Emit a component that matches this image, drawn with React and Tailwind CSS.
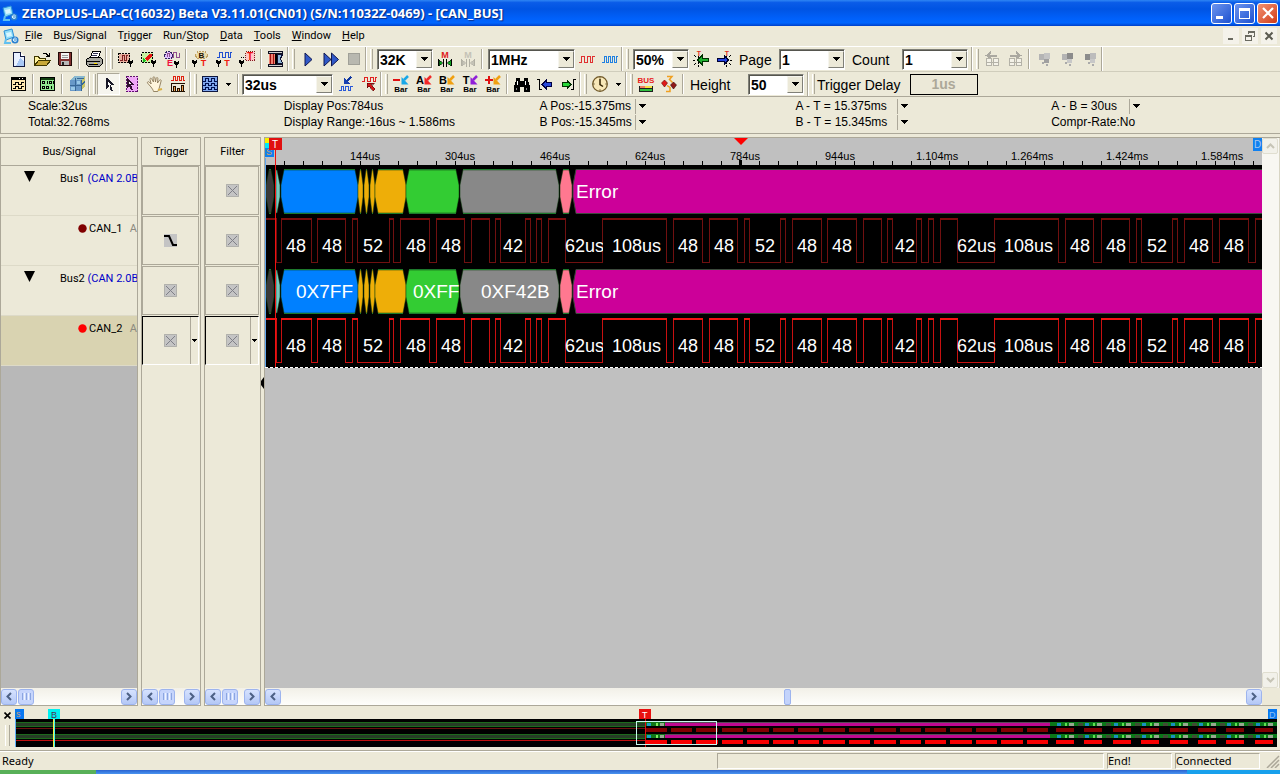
import React from "react";

/* ---------- icons ---------- */

const Svg = ({ children, w = 18, h = 18, box = "0 0 18 18" }) => (
  <svg width={w} height={h} viewBox={box} fill="none" shapeRendering="crispEdges" aria-hidden="true" className="block shrink-0">
    {children}
  </svg>
);

const Letter = ({ x, y, size, fill, children }) => (
  <text x={x} y={y} fontSize={size} fill={fill} textAnchor="middle" className="font-['Liberation_Sans',sans-serif] font-bold">
    {children}
  </text>
);

const Probe = ({ x, y }) => (
  <path d={`M${x} ${y}h1v1h2v-1h1v3h-1v1h-1v3h-1v-3h-1v-1h-1v-3z`} fill="#000" />
);

const NewIcon = () => (
  <Svg>
    <path d="M3.500 2.500h7l4 4v10h-11z" fill="#e8f0ff" stroke="#101840" />
    <path d="M10 8l4 4v4h-8z" fill="#a9c8f5" />
    <path d="M10.500 2.500v4h4" stroke="#101840" fill="#fff" />
  </Svg>
);
const OpenIcon = () => (
  <Svg>
    <path d="M1.500 15.500v-9h4l1 2h6v2" fill="#fff3a0" stroke="#403800" />
    <path d="M1.500 15.500l4-5h12l-4 5z" fill="#c8a838" stroke="#403800" />
    <path d="M10 3.500h3l3 3M16.500 3v4M13 6.500h4" stroke="#000" />
  </Svg>
);
const SaveIcon = () => (
  <Svg>
    <path d="M2.500 2.500h13v13h-12l-1-1z" fill="#803030" stroke="#200808" />
    <path d="M5 3h8v6h-8z" fill="#f4f4f4" />
    <path d="M6 5h6M6 7h6" stroke="#999" />
    <path d="M5 11h8v4h-8z" fill="#b8b8b8" />
    <path d="M6 12h2v3h-2z" fill="#222" />
  </Svg>
);
const PrintIcon = () => (
  <Svg>
    <path d="M5.500 7.500l2-6h8l-2 6z" fill="#fff" stroke="#000" />
    <path d="M8 3.500h5M7 5.500h5" stroke="#335" />
    <path d="M1.500 9.500l3-2h11l2 2v4l-3 3h-11l-2-2z" fill="#a8a8a0" stroke="#000" />
    <path d="M2 11.500h13M4 14.500h9" stroke="#000" />
    <path d="M9 13h3v1h-3z" fill="#ffe000" />
  </Svg>
);
const TrigBus = () => (
  <Svg>
    <path d="M1.500 3.500h11v9h-11z" fill="#e8b0a0" stroke="#000" strokeDasharray="2 1" />
    <path d="M3 10.500h2v-5h2v5h2v-5h2" stroke="#802020" />
    <Probe x={12} y={10} />
  </Svg>
);
const TrigSig = () => (
  <Svg>
    <path d="M1.500 2.500h11v10h-11z" fill="#c8f0a0" stroke="#000" strokeDasharray="2 1" />
    <path d="M5 9l4-5h3v3l-5 4z" fill="#e81010" />
    <path d="M3 8l3 2-1 2h-2z" fill="#10c020" />
    <Probe x={12} y={10} />
  </Svg>
);
const TrigEdge = () => (
  <Svg>
    <path d="M1.500 5.500l2-4h4l2 4-1 3h-6z" fill="#e0c0ff" stroke="#302060" strokeDasharray="2 1" />
    <path d="M4 7v-4h2v4M9 7.500h1v-5h3v5h3v-5" stroke="#905090" />
    <Letter x={7} y={16} size={9} fill="#f01040">E</Letter>
    <Probe x={12} y={11} />
  </Svg>
);
const TrigB = () => (
  <Svg>
    <path d="M3 5.500l3-4h7l3 4-3 3h-7z" fill="#ead9a8" stroke="#c0a060" strokeDasharray="2 1" />
    <Letter x={9.500} y={8} size={8} fill="#201000">B</Letter>
    <Letter x={11.500} y={16} size={9} fill="#f02010">T</Letter>
    <Probe x={1} y={10} />
  </Svg>
);
const TrigWave = () => (
  <Svg>
    <path d="M2 7.500h2v-5h3v5h3v-5h3v5h2v-5h2" stroke="#2050d0" />
    <Letter x={12} y={16} size={9} fill="#f02010">T</Letter>
    <Probe x={2} y={10} />
  </Svg>
);
const TrigMark = () => (
  <Svg>
    <path d="M7.500 1.500h9v9h-9z" fill="#ffc8c8" stroke="#802020" strokeDasharray="1 1" />
    <Letter x={12} y={10} size={10} fill="#f01010">T</Letter>
    <Probe x={2} y={10} />
    <path d="M3 7.500h4" stroke="#000" strokeDasharray="1 1" />
  </Svg>
);
const DoorIcon = () => (
  <Svg>
    <path d="M1.500 1.500h14v2h-14zM1.500 14.500h14v2h-14z" fill="#d0d0d0" stroke="#101020" />
    <path d="M2 4h8v10h-8z" fill="#f08070" />
    <path d="M3.500 4v10M6.500 4v10" stroke="#a01010" />
    <path d="M9 4v10" stroke="#000" strokeWidth="2" />
    <path d="M10.500 4.500h5l-2 4 2 5h-5z" fill="#90b8d8" stroke="#101030" />
  </Svg>
);
const Play = () => (
  <svg width="18" height="18" viewBox="0 0 18 18" className="block"><path d="M6 3l7 6.500-7 6.500z" fill="#3058c8" stroke="#101850" /></svg>
);
const Fast = () => (
  <svg width="18" height="18" viewBox="0 0 18 18" className="block"><path d="M2 3l7 6.500-7 6.500zM9.500 3l7 6.500-7 6.500z" fill="#3058c8" stroke="#101850" /></svg>
);
const Stop = () => (
  <Svg><path d="M3.500 3.500h11v11h-11z" fill="#b8b8b0" stroke="#a0a098" /></Svg>
);
const MIcon = ({ m = "#e02020", a = "#10a020", k = "#000" }) => (
  <Svg>
    <Letter x={9} y={8} size={9} fill={m}>M</Letter>
    <path d="M7.500 9v8M10.500 9v8M2.500 9v7M15.500 9v7" stroke={k} />
    <path d="M3 10l4 3-4 3zM15 10l-4 3 4 3z" fill={a} stroke={k} strokeWidth="0.500" />
  </Svg>
);
const Waves = ({ c, n }) => (
  <Svg>
    <path d={n === 3 ? "M1 12.500h2v-6h3v6h3v-6h3v6h2v-6h3" : "M1 12.500h2v-6h2v6h2v-6h2v6h2v-6h2v6h2v-6h2"} stroke={c} />
  </Svg>
);
const Move = ({ left }) => (
  <Svg>
    <path d={left ? "M6.500 6v12" : "M11.500 6v12"} stroke="#000" strokeDasharray="2 1" />
    <Letter x={left ? 7 : 12} y={6} size={7} fill="#e03020">T</Letter>
    {left ? (
      <path d="M5.500 10l4.500-4.500v3h6v3h-6v3z" fill="#20b030" stroke="#003000" />
    ) : (
      <path d="M13.500 10l-4.500-4.500v3h-7v3h7v3z" fill="#2040e0" stroke="#000030" />
    )}
    <path d={left ? "M2 5l2 2M2 15l2-2M1 10h2" : "M16 5l-2 2M16 15l-2-2M15 10h2"} stroke="#000" />
  </Svg>
);
const PageMove = ({ right }) => (
  <Svg>
    <path d={right ? "M4 5.500h8M10 2l4 3.500-4 3" : "M6 5.500h8M8 2l-4 3.500 4 3"} stroke="#aaa8a0" strokeWidth="2" />
    <path d="M3.500 8.500h5v7h-5zM10.500 8.500h5v7h-5zM3 12h13" stroke="#b4b2a8" fill="#f4f2e8" />
  </Svg>
);
const Blocks = ({ n }) => (
  <Svg>
    <path d="M4 4h6v6h-6z" fill={n === 3 ? "#8c8c8c" : "#b4b4b4"} />
    <path d="M9 3h6v6h-6z" fill={n === 2 ? "#8c8c8c" : n === 1 ? "#c4c4c4" : "#bcbcbc"} />
    <path d="M9 9h5v4h-5z" fill={n === 1 ? "#a0a0a0" : "#c8c8c8"} />
    <path d="M7 12h2v2h-2zM11 14h2v2h-2z" fill="#aaa" />
  </Svg>
);

const WinWave = () => (
  <Svg>
    <path d="M1.500 2.500h14v13h-14z" fill="#ffe8b0" stroke="#000" />
    <path d="M2 3h13v2h-13z" fill="#000" />
    <path d="M3 9.500h2v-2h3v2h3v-2h3M3 13.500h2v-2h3v2h3v-2h3" stroke="#000" />
    <path d="M12 3.500h1M9 3.500h1" stroke="#fff" />
  </Svg>
);
const WinBits = () => (
  <Svg>
    <path d="M1.500 2.500h14v13h-14z" fill="#90e890" stroke="#000" />
    <path d="M2 3h13v2h-13z" fill="#104010" />
    <path d="M3.500 6.500h2v2h-2zM10.500 6.500h2v2h-2zM3.500 11.500h2v2h-2zM7.500 11.500h2v2h-2zM8.500 6v3M14.500 6v3M12.500 11v3" stroke="#000" />
  </Svg>
);
const Cube = () => (
  <Svg>
    <path d="M2 5l4-4h11v10l-4 5h-11z" fill="#c8c468" />
    <path d="M2 5h11v11h-11z" fill="#6898c8" />
    <path d="M6 1h11l-4 4h-11z" fill="#88b8d0" />
    <path d="M7.500 3v13M2 10.500h11l4-4M13.500 5v11M9 3.500h7" stroke="#386898" />
    <path d="M3 12h4v3h-4zM9 6h3v3h-3z" fill="#98c8e8" />
  </Svg>
);
const Cursor = () => (
  <Svg>
    <path d="M6 3h1l7 7h-3l2 6h-2l-2-5-3 3z" fill="#181828" />
    <path d="M8 7l3 3h-1v3l-1-3h-1z" fill="#fff" />
  </Svg>
);
const SelectIcon = () => (
  <Svg>
    <path d="M3.500 1.500h11v15h-11z" fill="#f0a8f8" stroke="#601070" strokeDasharray="2 1" />
    <path d="M4 3l7 7h-3l2 5h-2l-2-4-2 2z" fill="#301030" />
    <path d="M6 7l2 2h-1v2z" fill="#fff" />
  </Svg>
);
const Hand = () => (
  <svg width="18" height="18" viewBox="0 0 18 18" className="block">
    <path d="M5 12l-3.500-4c-.5-1 .8-1.800 1.700-1l2 2L4 4.500c-.3-1.300 1.200-1.800 1.700-.6L7.500 7 7 2.800c0-1.300 1.600-1.400 1.800-.2L9.500 7l.7-3.700c.3-1.200 1.800-.9 1.700.3L11.500 8l2-2.800c.7-1 2-.3 1.600.8L13.500 12c-.4 2-1.500 3.500-1.700 4.500H7.500C7.200 14.800 6 13.500 5 12z" fill="#fff6dc" stroke="#8a7858" strokeWidth=".9" />
    <path d="M12 15l4-1" stroke="#d8b048" strokeWidth="2" />
  </svg>
);
const Bars = () => (
  <Svg>
    <path d="M2 5.500h2v-4h2v4h2v-4h2v4h2v-4h2v4h2" stroke="#e02010" />
    <path d="M2 8.500h14M2.500 8v9M2 16.500h14" stroke="#201000" />
    <path d="M4 11h3v6h-3zM8 13h3v4h-3zM12 10h3v7h-3z" fill="#201000" />
    <path d="M5 12h1v4h-1zM9 14h1v2h-1zM13 11h1v5h-1z" fill="#f0a050" />
  </Svg>
);
const BlueWave = () => (
  <Svg>
    <path d="M1.500 1.500h15v15h-15z" fill="#80a8f0" stroke="#101840" />
    <path d="M2 6.500h2v-3h3v3h3v-3h3v3h3M2 10.500h2v-2h3v2h3v-2h3v2h3M2 14.500h2v-2h3v2h3v-2h3v2h3" stroke="#001050" />
  </Svg>
);
const GoDown = () => (
  <Svg>
    <path d="M14 2l-4 4" stroke="#1038a0" strokeWidth="2" />
    <path d="M7 3v6h7z" fill="#1840b0" />
    <path d="M2 15.500h2v-4h2v4h2v-4h3v4h2v-4h3" stroke="#2858d8" />
  </Svg>
);
const GoUp = () => (
  <Svg>
    <path d="M2 6.500h2v-4h3v4h3v-4h3v4h2v-4h2" stroke="#e02020" />
    <path d="M7 8h7v1h-3l4 5-2 2-4-5-2 2z" fill="#d01818" stroke="#400000" strokeWidth=".5" />
  </Svg>
);
const BarIcon = ({ k, c }) => (
  <svg width="20" height="20" viewBox="0 0 20 20" aria-hidden="true" className="block shrink-0">
    {k === "-" && <path d="M2 6h7" stroke="#e01010" strokeWidth="2" />}
    {k === "+" && <path d="M2 6h8M6 2v8" stroke="#e01010" strokeWidth="2" />}
    {k.length === 1 && k > "@" && <Letter x={6} y={10} size={11} fill="#000">{k}</Letter>}
    <path d="M17 2l-4 4" stroke={c} strokeWidth="2.500" />
    <path d="M10.500 3v7.500h7z" fill={c} />
    <Letter x={10} y={18} size={8} fill="#000">Bar</Letter>
  </svg>
);
const Binoc = () => (
  <Svg>
    <path d="M3 3h4v3h4v-3h4v3l2 5v6h-6v-5h-4v5h-6v-6l2-5z" fill="#000" />
    <path d="M4 6h1v4h-1zM12 6h1v4h-1z" fill="#fff" />
    <path d="M3.500 13v2M13.500 13v2" stroke="#888" />
  </Svg>
);
const JumpL = () => (
  <Svg>
    <path d="M1 4.500h2.500v10h2.500" stroke="#000" />
    <path d="M6 9.500l4-4v2h5v4h-5v2z" fill="#2848d8" stroke="#000040" />
  </Svg>
);
const JumpR = () => (
  <Svg>
    <path d="M17 4.500h-2.500v10h-2.500" stroke="#000" />
    <path d="M12 9.500l-4-4v2h-5v4h5v2z" fill="#28d838" stroke="#003000" />
  </Svg>
);
const Clock = () => (
  <svg width="18" height="18" viewBox="0 0 18 18" className="block">
    <circle cx="9" cy="9" r="7.300" fill="#f8e8b8" stroke="#705828" strokeWidth="1.300" />
    <path d="M9 4v5.500l3 2" stroke="#302000" strokeWidth="1.500" fill="none" />
    <path d="M9 2.500v1M9 14.500v1M2.500 9h1M14.500 9h1" stroke="#302000" />
  </svg>
);
const BusIcon = () => (
  <Svg>
    <Letter x={9} y={8} size={8} fill="#e82020">BUS</Letter>
    <path d="M2 11h14v6h-14z" fill="#202020" />
    <path d="M3 11h12v2h-12z" fill="#f8e040" />
    <path d="M3 11h5v2h-5z" fill="#f08060" />
    <path d="M3 14h12v2h-12z" fill="#30c040" />
  </Svg>
);
const Hearts = () => (
  <svg width="18" height="18" viewBox="0 0 18 18" className="block">
    <path d="M7 1.500h5l-2.500 3 3 3M6 16.500h4v-4l-3-2" stroke="#f0a020" fill="none" strokeWidth="1.500" />
    <path d="M1.500 8l3-3 3 3-3 4z" fill="#e01818" stroke="#600" strokeWidth=".6" />
    <path d="M10.500 10l3-3 3 3-3 4z" fill="#901818" stroke="#300" strokeWidth=".6" />
  </svg>
);
const AppLogo = () => (
  <svg width="16" height="16" viewBox="0 0 16 16" className="block shrink-0" aria-hidden="true">
    <path d="M1 3l8-2 2 8-8 3z" fill="#8fdcf8" stroke="#2a90d8" />
    <path d="M3 5l5-1 1 4-5 1z" fill="#d8f6ff" />
    <path d="M3 11l-1 4h6" stroke="#60c0f0" fill="none" strokeWidth="2" />
    <circle cx="12" cy="12" r="3.500" fill="#2a80d0" />
    <path d="M10 12h4M13.500 10.500c-1.500-1.200-3.500 0-3.200 1.500.2 1.600 2 2 3.200 1" stroke="#e0f8ff" fill="none" />
  </svg>
);

/* ---------- toolbar parts ---------- */

const Tool = ({ label, children, on }) => (
  <button
    type="button"
    aria-label={label}
    className={
      on
        ? "flex h-[22px] w-[23px] shrink-0 items-center justify-center border border-[#aca899] border-r-white border-b-white bg-[#f6f5ee]"
        : "flex h-[22px] w-[23px] shrink-0 items-center justify-center"
    }
  >
    {children}
  </button>
);

const Sep = () => (
  <span className="flex h-[20px] w-[6px] shrink-0 justify-center">
    <span className="w-[2px] border-r border-white bg-[#aca899]" />
  </span>
);

const Grip = () => (
  <span className="flex h-[24px] w-[9px] shrink-0 items-center gap-[3px]">
    <span className="h-full w-[2px] border-r border-white bg-[#aca899]" />
    <span className="h-[20px] w-[3px] border-r border-l border-r-[#aca899] border-l-white" />
  </span>
);

const Drop = () => (
  <svg width="5" height="3" viewBox="0 0 5 3" className="block shrink-0" shapeRendering="crispEdges">
    <path d="M0 0h5L2.500 3z" />
  </svg>
);

const Combo = ({ label, value, className }) => (
  <span className={"grid h-[21px] shrink-0 items-center border border-[#808078] border-r-white border-b-white bg-white " + className}>
    <select
      aria-label={label}
      className="col-start-1 row-start-1 h-[19px] w-full appearance-none border-t border-l border-[#55554e] bg-white pl-px text-[14px] leading-[18px] font-bold outline-none"
      defaultValue={value}
    >
      <option>{value}</option>
    </select>
    <span className="pointer-events-none col-start-1 row-start-1 flex h-[17px] w-[16px] items-center justify-center justify-self-end border border-[#f6f5ee] border-r-[#808078] border-b-[#808078] bg-[#ece9d8]">
      <svg width="7" height="4" viewBox="0 0 7 4" shapeRendering="crispEdges"><path d="M0 0h7L3.500 4z" /></svg>
    </span>
  </span>
);

/* ---------- scroll bars ---------- */

const Chevron = ({ right }) => (
  <svg width="8" height="9" viewBox="0 0 8 9" className="block">
    <path d={right ? "M2 1l3.500 3.500L2 8" : "M6 1L2.500 4.500 6 8"} fill="none" stroke="#4d6185" strokeWidth="2" />
  </svg>
);

const ArrowButton = ({ right }) => (
  <button
    type="button"
    aria-label={right ? "Scroll right" : "Scroll left"}
    className="flex h-[16px] w-[16px] shrink-0 items-center justify-center rounded-[3px] border border-[#9db4ee] bg-gradient-to-b from-[#d6e2fe] to-[#b4c8f6]"
  >
    <Chevron right={right} />
  </button>
);

const HScroll = ({ wide }) => (
  <div className="flex h-[17px] shrink-0 items-center bg-gradient-to-b from-[#f2f0e8] to-[#fefefb]">
    <ArrowButton />
    {wide ? (
      <>
        <span className="flex-[503]" />
        <span className="h-[16px] w-[7px] rounded-[2px] border border-[#9db4ee] bg-[#c3d3fb]" />
        <span className="flex-[455]" />
      </>
    ) : (
      <>
        <span className="ml-px flex h-[16px] w-[16px] shrink-0 items-center justify-center gap-px rounded-[3px] border border-[#9db4ee] bg-[#c6d5fc]">
          <i className="h-[7px] w-px bg-[#8ca6e0]" />
          <i className="h-[7px] w-px bg-[#eef4fe]" />
          <i className="h-[7px] w-px bg-[#8ca6e0]" />
          <i className="h-[7px] w-px bg-[#eef4fe]" />
          <i className="h-[7px] w-px bg-[#8ca6e0]" />
        </span>
        <span className="flex-1" />
      </>
    )}
    <ArrowButton right />
  </div>
);

const VButton = ({ down }) => (
  <button
    type="button"
    aria-label={down ? "Scroll down" : "Scroll up"}
    className="flex h-[16px] w-[16px] items-center justify-center rounded-[2px] border border-[#e0ded0] bg-[#f2f1ea]"
  >
    <svg width="9" height="6" viewBox="0 0 9 6"><path d={down ? "M1 1l3.500 3.500L8 1" : "M1 5l3.500-3.500L8 5"} fill="none" stroke="#c6c4b6" strokeWidth="2" /></svg>
  </button>
);

/* ---------- wave form ---------- */

// x positions at which the line level changes, starting high
const EDGES = [
  11, 16, 46, 52, 80, 87, 92, 124, 128, 135, 164, 171, 199, 206, 224, 230, 235, 260, 265, 271, 276, 283, 300, 337, 401,
  408, 437, 444, 472, 479, 484, 515, 520, 527, 556, 562, 591, 598, 616, 622, 627, 651, 656, 663, 668, 675, 692, 729, 793,
  800, 828, 836, 864, 871, 876, 907, 912, 919, 947, 954, 983, 990,
];
const LABELS = [
  [21, "48"], [57, "48"], [98, "52"], [141, "48"], [176, "48"], [238, "42"], [300, "62us"], [347, "108us"], [413, "48"],
  [449, "48"], [490, "52"], [532, "48"], [567, "48"], [630, "42"], [692, "62us"], [739, "108us"], [805, "48"],
  [841, "48"], [882, "52"], [924, "48"], [959, "48"],
];
const RULER = ["144us", "304us", "464us", "624us", "784us", "944us", "1.104ms", "1.264ms", "1.424ms", "1.584ms"];
const FRAMES = [
  [1, 9, "#3a3a3a"], [16, 93, "#0080ff"], [93, 98, "#eeae08"], [99, 104, "#eeae08"], [105, 110, "#eeae08"],
  [110, 141, "#eeae08"], [141, 194, "#33cc33"], [195, 294, "#888"], [295, 307, "#ff7890"],
];

const Signal = ({ top, high, low }) => {
  const hi = top + 1;
  const lo = top + 45;
  let d = "";
  let tops = `M0 ${hi}`;
  let level = true;
  EDGES.forEach((x) => {
    if (level) {
      tops += `H${x + 1}`;
      d += `M${x + 0.5} ${hi}V${lo}`;
    } else {
      d += `V${lo - 0.5}H${x + 0.5}V${hi}`;
      tops += `M${x} ${hi}`;
    }
    level = !level;
  });
  tops += "H4000";
  return (
    <g>
      <path d={d} fill="none" stroke={low} shapeRendering="crispEdges" />
      <path d={tops} fill="none" stroke={high} strokeWidth="2" shapeRendering="crispEdges" />
      {LABELS.map(([x, t]) => (
        <text key={x} x={x} y={top + 34} fontSize="18" fill="#fff" clipPath={t === "62us" ? "url(#narrow)" : undefined}>
          {t}
        </text>
      ))}
    </g>
  );
};

const Bus = ({ top, texts }) => {
  const b = top + 45;
  const m = top + 22;
  return (
    <g>
      <path d={`M11 ${top + 1}h1L15 ${m - 6}V${m + 6}L12 ${b - 1}h-1z`} fill="#78c8c0" stroke="#0c400c" strokeWidth="0.500" />
      {FRAMES.map(([x1, x2, c]) => {
        const s = x2 - x1 < 8 ? 2 : 3;
        return (
          <g key={x1}>
            <path
              d={`M${x1 + s} ${top + 1}H${x2 - s}L${x2} ${m - 6}V${m + 6}L${x2 - s} ${b - 1}H${x1 + s}L${x1} ${m + 6}V${m - 6}z`}
              fill={c}
              stroke="#0c400c"
              strokeWidth="0.500"
            />
            <path d={`M${x1 + s} ${top + 0.5}H${x2 - s}M${x1 + s} ${b - 0.5}H${x2 - s}`} stroke="#1c7a2c" />
          </g>
        );
      })}
      <path d={`M4000 ${top + 0.5}H311L308 ${m - 6}V${m + 6}L311 ${b - 0.5}H4000z`} fill="#cc0099" stroke="#3c4a3c" />
      {texts && (
        <g fontSize="19" fill="#fff">
          <text x="31" y={top + 29}>0X7FF</text>
          <text x="148" y={top + 29} clipPath="url(#green)">0XFF</text>
          <text x="216" y={top + 29}>0XF42B</text>
        </g>
      )}
      <text x="311" y={top + 29} fontSize="19" fill="#fff">Error</text>
    </g>
  );
};

const WaveView = () => (
  <svg width="100%" height="230" className="block">
    <defs>
      <clipPath id="narrow"><path d="M300 0h38v230h-38zM692 0h39v230h-39z" /></clipPath>
      <clipPath id="green"><path d="M141 0h54v230h-54z" /></clipPath>
      <pattern id="minor" width="19" height="4" patternUnits="userSpaceOnUse"><path d="M0 0h1v4h-1z" /></pattern>
    </defs>
    <rect y="27" width="100%" height="203" fill="#000" />
    <rect y="23" width="100%" height="4" fill="url(#minor)" />
    <path d="M474 22h3v5h-3z" />
    {RULER.map((t, i) => (
      <text key={t} x={95 * (i + 1) - (t.length > 5 ? 14 : 10)} y="22" fontSize="11">
        {t}
      </text>
    ))}
    <path d="M469 0h14l-7 7z" fill="#f00" />
    <Bus top={31} />
    <Signal top={80} high="#7c0c0c" low="#701010" />
    <Bus top={131} texts />
    <Signal top={180} high="#f01414" low="#c81010" />
    <path d="M0 229.500H4000" stroke="#fff" strokeDasharray="3 2" />
    <path d="M0 0h5v8h-5z" fill="#f8f000" />
    <path d="M0 5h5v5h-5z" fill="#00e8f8" />
    <path d="M0 10h9v9h-9z" fill="#1080f0" />
    <text x="1" y="17" fontSize="9" fill="#d8a060">S</text>
    <path d="M.5 20v209" stroke="#60a8f0" />
    <path d="M4 0h13v12h-13z" fill="#e01010" />
    <text x="7" y="10" fontSize="10" fill="#fff">T</text>
    <path d="M10.500 12v217" stroke="#f01010" />
    <svg x="100%" overflow="visible">
      <path d="M-9 0h9v13h-9z" fill="#1080f0" />
      <text x="-8" y="10" fontSize="10" fill="#a8c8f0">D</text>
    </svg>
  </svg>
);

/* ---------- signal panels ---------- */

const Panel = ({ className, title, children, fill }) => (
  <section className={"flex flex-col border border-[#aca899] " + className}>
    <h2 className="flex h-[28px] shrink-0 items-center justify-center border-b border-[#aca899] pt-[2px] text-[11px]">{title}</h2>
    <div className={"flex flex-1 flex-col overflow-hidden " + (fill || "")}>{children}</div>
    <HScroll />
  </section>
);

const BusRow = ({ name }) => (
  <div className="flex h-[50px] shrink-0 border-b border-[#dddac8] bg-[#ece9d8] pt-[5px] pl-[23px] text-[11px] leading-[16px] whitespace-nowrap">
    <svg width="11" height="11" viewBox="0 0 11 11" className="mr-[25px] block shrink-0"><path d="M0 0h11L5.500 11z" /></svg>
    {name}&nbsp;<span className="text-[#0000c8]">(CAN 2.0B</span>
  </div>
);

const SignalRow = ({ name, dot, selected }) => (
  <div
    className={
      "flex h-[50px] shrink-0 justify-between border-b border-[#dddac8] pt-[5px] pl-[77px] text-[11px] leading-[16px] whitespace-nowrap " +
      (selected ? "bg-[#d9d3b1]" : "bg-[#ece9d8]")
    }
  >
    <span className="flex items-start gap-[2px]">
      <svg width="9" height="16" viewBox="0 0 9 16" className="block shrink-0"><circle cx="4.500" cy="7.500" r="4.200" fill={dot} /></svg>
      {name}
    </span>
    <span className="text-[#8c8a80]">A</span>
  </div>
);

const DontCare = () => (
  <svg width="13" height="13" viewBox="0 0 13 13" className="block">
    <path d="M.5.5h12v12h-12z" fill="#c4c4c4" stroke="#8a8a8a" strokeDasharray="1 1" />
    <path d="M2 2l9 9M11 2l-9 9" stroke="#808088" />
  </svg>
);
const Falling = () => (
  <svg width="13" height="13" viewBox="0 0 13 13" className="block">
    <path d="M0 0h13v13h-13z" fill="#c4c4c4" />
    <path d="M0 2h5l4 9h4" stroke="#000" strokeWidth="2" fill="none" />
  </svg>
);

const Cell = ({ icon, selected }) => (
  <button
    type="button"
    aria-label="Condition"
    className={
      "mr-px mb-px flex h-[49px] shrink-0 items-center border " +
      (selected ? "border-black border-r-white border-b-white pl-[8px]" : "border-[#aca899]")
    }
  >
    <span className="flex flex-1 justify-center">{icon}</span>
    {selected && (
      <span className="flex h-full w-[8px] items-center justify-center border-l border-[#aca899]">
        <Drop />
      </span>
    )}
  </button>
);

/* ---------- overview ---------- */

const range = (n) => Array.from({ length: n }, (_, i) => i);

const Overview = () => (
  <svg width="100%" height="41" className="block" shapeRendering="crispEdges">
    <rect y="10" width="100%" height="28" fill="#000" />
    {[13, 25].map((y, i) => (
      <g key={y}>
        <path d={`M0 ${y}H630v5H0z`} fill="#263c26" />
        <path d={`M0 ${y + 0.5}H630M0 ${y + 4.5}H630`} stroke="#1c6a1c" />
        <path d={`M0 ${y + 6.5}H630`} stroke={i ? "#c01010" : "#6a1010"} />
        <path d={`M650 ${y}H1036v1H650z`} fill="#5a4a58" />
        <path d={`M650 ${y + 1}H1036v3H650z`} fill="#c00890" />
        <path d={`M630 ${y + 6}H1036v4H630z`} fill={i ? "#f80000" : "#800000"} />
        {range(16).map((n) => (
          <path key={n} d={`M${652 + n * 25.4} ${y + 6}h4v4h-4z`} fill="#000" />
        ))}
        <path d={`M630 ${y}h20v4h-20z`} fill="#107818" />
        <path d={`M632 ${y + 1}h4v3h-4z`} fill="#18a0c8" />
        <path d={`M641 ${y + 1}h2v3h-2z`} fill="#80f060" />
        <path d={`M645 ${y + 1}h4v3h-4z`} fill="#98a890" />
        <path d={`M1035 ${y}H1262v4H1035z`} fill="#0a7818" />
        {range(8).map((n) => (
          <g key={n}>
            <path d={`M${1041 + n * 28.4} ${y + 6}h18v4h-18z`} fill={i ? "#f80000" : "#800000"} />
            <path d={`M${1042 + n * 28.4} ${y + 1}h4v3h-4z`} fill="#1890c0" />
            <path d={`M${1050 + n * 28.4} ${y + 1}h2v3h-2z`} fill="#60e050" />
            <path d={`M${1054 + n * 28.4} ${y + 1}h5v3h-5z`} fill="#98a890" />
            <path d={`M${1063 + n * 28.4} ${y + 1}h5v3h-5z`} fill="#404c34" />
          </g>
        ))}
      </g>
    ))}
    <path d="M0 0h9v10h-9z" fill="#0878f0" />
    <text x="1" y="8" fontSize="9" fill="#d0a070">s</text>
    <path d="M.5 10v28" stroke="#60b0f8" />
    <path d="M33 0h12v10h-12z" fill="#00f0f0" />
    <text x="36" y="9" fontSize="9" fill="#503050">B</text>
    <path d="M38.500 10v28" stroke="#f8f040" />
    <path d="M39.500 10v28" stroke="#40f0f0" />
    <path d="M624 0h12v10h-12z" fill="#e81010" />
    <text x="627" y="9" fontSize="9" fill="#fff">T</text>
    <path d="M630.500 10v28" stroke="#e01010" />
    <path d="M621.500 12.500h80v23h-80z" fill="none" stroke="#c8f8f0" />
    <path d="M1253 0h9v10h-9z" fill="#0878f0" />
    <text x="1254" y="9" fontSize="9" fill="#90c0f0">D</text>
  </svg>
);

/* ---------- page ---------- */

const MENU = [["", "F", "ile"], ["B", "u", "s/Signal"], ["T", "r", "igger"], ["Run/", "S", "top"], ["", "D", "ata"], ["", "T", "ools"], ["", "W", "indow"], ["", "H", "elp"]];

const InfoLine = ({ text, drop, w = "" }) => (
  <div className="flex h-[16px] items-center">
    <span className={w}>{text}</span>
    {drop && (
      <button type="button" aria-label={"Change " + text} className="flex h-[15px] w-[14px] items-center justify-center border-l border-[#aca899]">
        <svg width="7" height="4" viewBox="0 0 7 4" shapeRendering="crispEdges"><path d="M0 0h7L3.500 4z" /></svg>
      </button>
    )}
  </div>
);

export default function App() {
  return (
    <div className="flex min-h-screen flex-col overflow-hidden bg-[#ece9d8] font-['Liberation_Sans',Arial,sans-serif] text-black">
      <header className="flex h-[26px] shrink-0 items-center gap-[4px] bg-[linear-gradient(#2f86f4_0%,#0a5ce8_10%,#0054e3_35%,#0060fa_70%,#0066ff_88%,#0040c8_100%)] px-[2px]">
        <AppLogo />
        <h1 className="flex-1 font-['Noto_Sans',sans-serif] text-[13px] leading-[20px] font-bold whitespace-nowrap text-white [text-shadow:1px_1px_1px_#0a2a80]">
          ZEROPLUS-LAP-C(16032) Beta V3.11.01(CN01) (S/N:11032Z-0469) - [CAN_BUS]
        </h1>
        <div className="flex gap-[2px]">
          <button type="button" aria-label="Minimize" className="flex h-[21px] w-[21px] items-end rounded-[3px] border border-white bg-gradient-to-br from-[#6d94ee] to-[#1c50d0] p-[4px]">
            <span className="h-[3px] w-[7px] bg-white" />
          </button>
          <button type="button" aria-label="Maximize" className="flex h-[21px] w-[21px] items-center justify-center rounded-[3px] border border-white bg-gradient-to-br from-[#6d94ee] to-[#1c50d0]">
            <span className="h-[11px] w-[11px] border border-t-[3px] border-white" />
          </button>
          <button type="button" aria-label="Close" className="flex h-[21px] w-[21px] items-center justify-center rounded-[3px] border border-white bg-gradient-to-br from-[#f09070] to-[#d03810]">
            <svg width="12" height="12" viewBox="0 0 12 12"><path d="M1 1l10 10M11 1L1 11" stroke="#fff" strokeWidth="2.200" /></svg>
          </button>
        </div>
      </header>

      <div className="flex h-[21px] shrink-0 items-center border-b border-white px-[3px]">
        <AppLogo />
        <nav className="flex flex-1 gap-[11px] pl-[6px] font-[Roboto,sans-serif] text-[11px] leading-[16px]">
          {MENU.map(([a, u, b]) => (
            <button type="button" key={a + u + b} className="whitespace-nowrap">
              {a}
              <u>{u}</u>
              {b}
            </button>
          ))}
        </nav>
        <div className="flex gap-[3px]">
          <button type="button" aria-label="Minimize window" className="flex h-[16px] w-[16px] items-center justify-center bg-[#f4f2ea]">
            <svg width="10" height="10" viewBox="0 0 10 10"><path d="M2 7h5v2H2z" fill="#6a6a60" /></svg>
          </button>
          <button type="button" aria-label="Restore window" className="flex h-[16px] w-[16px] items-center justify-center bg-[#f4f2ea]">
            <svg width="10" height="10" viewBox="0 0 10 10" shapeRendering="crispEdges"><path d="M3.500 3V.5h6v5H8M3 1.500h7M.5 4.500h6v5h-6zM0 5.500h7" stroke="#6a6a60" fill="none" /></svg>
          </button>
          <button type="button" aria-label="Close window" className="flex h-[16px] w-[16px] items-center justify-center bg-[#f4f2ea]">
            <svg width="10" height="10" viewBox="0 0 10 10"><path d="M1.500 1.500l7 7M8.500 1.500l-7 7" stroke="#5a5a50" strokeWidth="2" /></svg>
          </button>
        </div>
      </div>

      <div className="flex h-[25px] shrink-0 items-center border-b border-[#d0cdbc] pl-[7px]">
        <Tool label="New"><NewIcon /></Tool>
        <Tool label="Open"><OpenIcon /></Tool>
        <Tool label="Save"><SaveIcon /></Tool>
        <Sep />
        <Tool label="Print"><PrintIcon /></Tool>
        <Grip />
        <Tool label="Bus trigger"><TrigBus /></Tool>
        <Tool label="Signal trigger"><TrigSig /></Tool>
        <Tool label="Edge trigger"><TrigEdge /></Tool>
        <Sep />
        <Tool label="Trigger bar"><TrigB /></Tool>
        <Tool label="Trigger wave"><TrigWave /></Tool>
        <Tool label="Trigger mark"><TrigMark /></Tool>
        <Sep />
        <Tool label="Exit"><DoorIcon /></Tool>
        <Grip />
        <Tool label="Run"><Play /></Tool>
        <Tool label="Repeat run"><Fast /></Tool>
        <Tool label="Stop"><Stop /></Tool>
        <Grip />
        <Combo label="Memory depth" value="32K" className="ml-[3px] w-[56px]" />
        <Tool label="Compress"><MIcon /></Tool>
        <Tool label="Expand"><MIcon m="#c4c2b6" a="#c4c2b6" k="#b0aea2" /></Tool>
        <Sep />
        <Combo label="Sampling frequency" value="1MHz" className="ml-[3px] w-[87px]" />
        <Tool label="Internal clock"><Waves c="#e03030" n={3} /></Tool>
        <Tool label="External clock"><Waves c="#2080e0" n={4} /></Tool>
        <Grip />
        <Combo label="Trigger position" value="50%" className="ml-[3px] w-[56px]" />
        <Tool label="Move left"><Move left /></Tool>
        <Tool label="Move right"><Move /></Tool>
        <span className="mx-[4px] w-[36px] pt-[2px] text-[14px]">Page</span>
        <Combo label="Page" value="1" className="w-[66px]" />
        <span className="mr-[8px] ml-[7px] w-[42px] pt-[2px] text-[14px]">Count</span>
        <Combo label="Count" value="1" className="mr-[3px] w-[66px]" />
        <Grip />
        <Tool label="Previous page"><PageMove /></Tool>
        <Tool label="Next page"><PageMove right /></Tool>
        <Sep />
        <Tool label="Group one"><Blocks n={1} /></Tool>
        <Tool label="Group two"><Blocks n={2} /></Tool>
        <Tool label="Group three"><Blocks n={3} /></Tool>
        <span className="h-[24px] w-[2px] border-l border-[#aca899] bg-white" />
      </div>

      <div className="flex h-[24px] shrink-0 items-center pl-[7px]">
        <Tool label="Waveform window"><WinWave /></Tool>
        <Sep />
        <Tool label="Listing window"><WinBits /></Tool>
        <Sep />
        <Tool label="Packet window"><Cube /></Tool>
        <Grip />
        <Tool label="Pointer" on><Cursor /></Tool>
        <Tool label="Select area"><SelectIcon /></Tool>
        <Tool label="Drag"><Hand /></Tool>
        <Tool label="Statistics"><Bars /></Tool>
        <Grip />
        <Tool label="Display mode"><BlueWave /></Tool>
        <span className="flex w-[14px] justify-center"><Drop /></span>
        <Sep />
        <Combo label="Scale" value="32us" className="mx-px w-[91px]" />
        <Tool label="Zoom out"><GoDown /></Tool>
        <Tool label="Zoom in"><GoUp /></Tool>
        <Grip />
        <Tool label="Delete bar"><BarIcon k="-" c="#18a8e8" /></Tool>
        <Tool label="Go to A bar"><BarIcon k="A" c="#f02828" /></Tool>
        <Tool label="Go to B bar"><BarIcon k="B" c="#f0a010" /></Tool>
        <Tool label="Go to T bar"><BarIcon k="T" c="#9020d8" /></Tool>
        <Tool label="Add bar"><BarIcon k="+" c="#f0a010" /></Tool>
        <Sep />
        <Tool label="Find"><Binoc /></Tool>
        <Tool label="Previous edge"><JumpL /></Tool>
        <Tool label="Next edge"><JumpR /></Tool>
        <Grip />
        <Tool label="Time display"><Clock /></Tool>
        <span className="flex w-[14px] justify-center"><Drop /></span>
        <Grip />
        <Tool label="Bus property"><BusIcon /></Tool>
        <Tool label="Packet property"><Hearts /></Tool>
        <Sep />
        <span className="mx-[4px] w-[54px] pt-[2px] text-[14px]">Height</span>
        <Combo label="Height" value="50" className="mr-[3px] w-[56px]" />
        <Grip />
        <label htmlFor="delay" className="mr-[9px] ml-px pt-[2px] text-[14px] whitespace-nowrap">Trigger Delay</label>
        <input id="delay" disabled defaultValue="1us" className="h-[21px] w-[68px] border border-black bg-[#ece9d8] text-center text-[14px] font-bold text-[#aca899]" />
      </div>

      <div className="grid h-[38px] shrink-0 grid-cols-5 border-t border-b border-l border-[#aca899] pt-px text-[12px] whitespace-nowrap [&>div]:pl-[27px]">
        <div>
          <InfoLine text="Scale:32us" />
          <InfoLine text="Total:32.768ms" />
        </div>
        <div>
          <InfoLine text="Display Pos:784us" />
          <InfoLine text="Display Range:-16us ~ 1.586ms" />
        </div>
        <div>
          <InfoLine text="A Pos:-15.375ms" drop w="w-[95px]" />
          <InfoLine text="B Pos:-15.345ms" drop w="w-[95px]" />
        </div>
        <div>
          <InfoLine text="A - T = 15.375ms" drop w="w-[102px]" />
          <InfoLine text="B - T = 15.345ms" drop w="w-[102px]" />
        </div>
        <div>
          <InfoLine text="A - B = 30us" drop w="w-[78px]" />
          <InfoLine text="Compr-Rate:No" />
        </div>
      </div>

      <main className="flex flex-1 items-stretch pt-[3px] font-[Roboto,sans-serif]">
        <Panel title="Bus/Signal" className="w-[138px] shrink-0" fill="bg-[#b8b8b8]">
          <BusRow name="Bus1" />
          <SignalRow name="CAN_1" dot="#800000" />
          <BusRow name="Bus2" />
          <SignalRow name="CAN_2" dot="#f00" selected />
        </Panel>
        <Panel title="Trigger" className="ml-[3px] w-[60px] shrink-0">
          <Cell />
          <Cell icon={<Falling />} />
          <Cell icon={<DontCare />} />
          <Cell icon={<DontCare />} selected />
        </Panel>
        <Panel title="Filter" className="ml-[3px] w-[57px] shrink-0">
          <Cell icon={<DontCare />} />
          <Cell icon={<DontCare />} />
          <Cell icon={<DontCare />} />
          <Cell icon={<DontCare />} selected />
        </Panel>
        <div className="flex w-[3px] shrink-0 flex-col pt-[240px]">
          <svg width="3" height="12" viewBox="0 0 3 12" className="block"><path d="M3 0v12L0 8V4z" /></svg>
        </div>
        <section className="flex min-w-0 flex-1 flex-col border-t border-b border-l border-[#aca899] font-['Liberation_Sans',Arial,sans-serif]">
          <div className="flex flex-1">
            <div className="min-w-0 flex-1 overflow-hidden bg-[#c0c0c0]">
              <WaveView />
            </div>
            <div className="flex w-[18px] shrink-0 flex-col justify-between border-r border-[#d8d5c4] bg-[#f8f7f2]">
              <VButton />
              <VButton down />
            </div>
          </div>
          <div className="pr-[18px]"><HScroll wide /></div>
        </section>
      </main>

      <div className="flex h-[45px] shrink-0 border-b border-[#aca899] pt-[3px] pr-[3px]">
        <div className="flex w-[15px] shrink-0 flex-col items-center gap-[6px] pt-[3px] pr-px">
          <button type="button" aria-label="Close overview">
            <svg width="7" height="7" viewBox="0 0 7 7" className="block"><path d="M.5.5l6 6M6.500.5l-6 6" stroke="#000" strokeWidth="1.600" /></svg>
          </button>
          <span className="h-[21px] w-[5px] border-r border-l border-r-[#aca899] border-l-white" />
        </div>
        <div className="min-w-0 flex-1 overflow-hidden"><Overview /></div>
      </div>

      <footer className="flex h-[19px] shrink-0 items-center gap-[3px] border-t border-white font-['Noto_Sans',sans-serif] text-[11px]">
        <span className="flex-[715] pl-[2px]">Ready</span>
        <span className="h-[16px] flex-[387] border border-[#aca899] border-r-white border-b-white" />
        <span className="flex h-[16px] w-[65px] items-center border border-[#aca899] border-r-white border-b-white">End!</span>
        <span className="flex h-[16px] w-[85px] items-center border border-[#aca899] border-r-white border-b-white">Connected</span>
        <svg width="17" height="14" viewBox="0 0 17 14" className="block"><path d="M4 14L16 2M8 14l8-8M12 14l4-4" stroke="#aca899" strokeWidth="1.500" /></svg>
      </footer>
      <div className="flex h-[4px] shrink-0 bg-gradient-to-b from-[#2a62d0] to-[#4a94f0]">
        <span className="w-[96px] bg-[#58b058]" />
        <span className="flex-1" />
        <span className="w-[93px] bg-[#18a0ec]" />
      </div>
    </div>
  );
}
